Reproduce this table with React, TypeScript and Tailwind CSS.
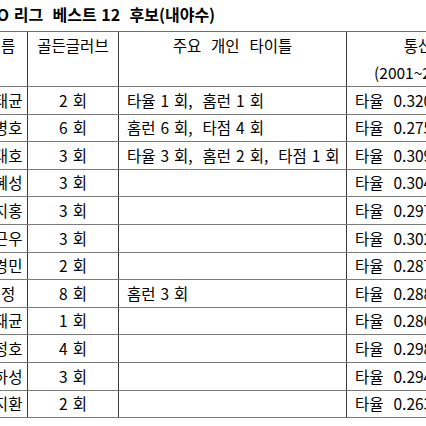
const rows = [
  { name: "김태균", gg: "2 회", titles: "타율 1 회,  홈런 1 회", avg: "타율  0.320" },
  { name: "박병호", gg: "6 회", titles: "홈런 6 회,  타점 4 회", avg: "타율  0.275" },
  { name: "이대호", gg: "3 회", titles: "타율 3 회,  홈런 2 회,  타점 1 회", avg: "타율  0.309" },
  { name: "김혜성", gg: "3 회", titles: "", avg: "타율  0.304" },
  { name: "안치홍", gg: "3 회", titles: "", avg: "타율  0.297" },
  { name: "정근우", gg: "3 회", titles: "", avg: "타율  0.302" },
  { name: "허경민", gg: "2 회", titles: "", avg: "타율  0.287" },
  { name: "최정", gg: "8 회", titles: "홈런 3 회", avg: "타율  0.288" },
  { name: "황재균", gg: "1 회", titles: "", avg: "타율  0.286" },
  { name: "강정호", gg: "4 회", titles: "", avg: "타율  0.298" },
  { name: "김하성", gg: "3 회", titles: "", avg: "타율  0.294" },
  { name: "오지환", gg: "2 회", titles: "", avg: "타율  0.263" },
];

export default function App() {
  return (
    <div
      className="w-[426px] h-[426px] overflow-hidden bg-white text-black"
      style={{ fontFamily: '"Noto Sans CJK KR", "Noto Sans", sans-serif' }}
    >
      <div className="ml-[-25px] w-[540px]">
        <div className="h-[31px] pt-[3px] text-[16px] font-bold leading-[22px] whitespace-pre [word-spacing:1px]">
          KBO 리그  베스트 12  후보(내야수)
        </div>
        <div className="border-t border-[#6f6f6f] text-[15.5px] [word-spacing:1.5px]">
          {/* header */}
          <div className="flex h-[55px] border-b border-[#7a7a7a]">
            <div className="w-[53px] border-r border-[#3a3a3a] text-center leading-[27px]">이름</div>
            <div className="w-[91px] border-r border-[#3a3a3a] text-center leading-[27px]">골든글러브</div>
            <div className="w-[228px] border-r border-[#3a3a3a] text-center leading-[27px] whitespace-pre">
              주요  개인  타이틀
            </div>
            <div className="w-[142px] flex flex-col items-center leading-[27px]">
              <span>통산</span>
              <span>(2001~2023)</span>
            </div>
          </div>
          {rows.map((r) => (
            <div key={r.name} className="flex h-[27.6px] border-b border-[#7a7a7a]">
              <div className="w-[53px] border-r border-[#3a3a3a] flex items-center justify-center whitespace-nowrap">
                {r.name}
              </div>
              <div className="w-[91px] border-r border-[#3a3a3a] flex items-center justify-center">
                {r.gg}
              </div>
              <div className="w-[228px] border-r border-[#3a3a3a] flex items-center pl-[8px] whitespace-pre">
                {r.titles}
              </div>
              <div className="w-[142px] flex items-center pl-[8px] whitespace-pre">{r.avg}</div>
            </div>
          ))}
        </div>
      </div>
    </div>
  );
}
